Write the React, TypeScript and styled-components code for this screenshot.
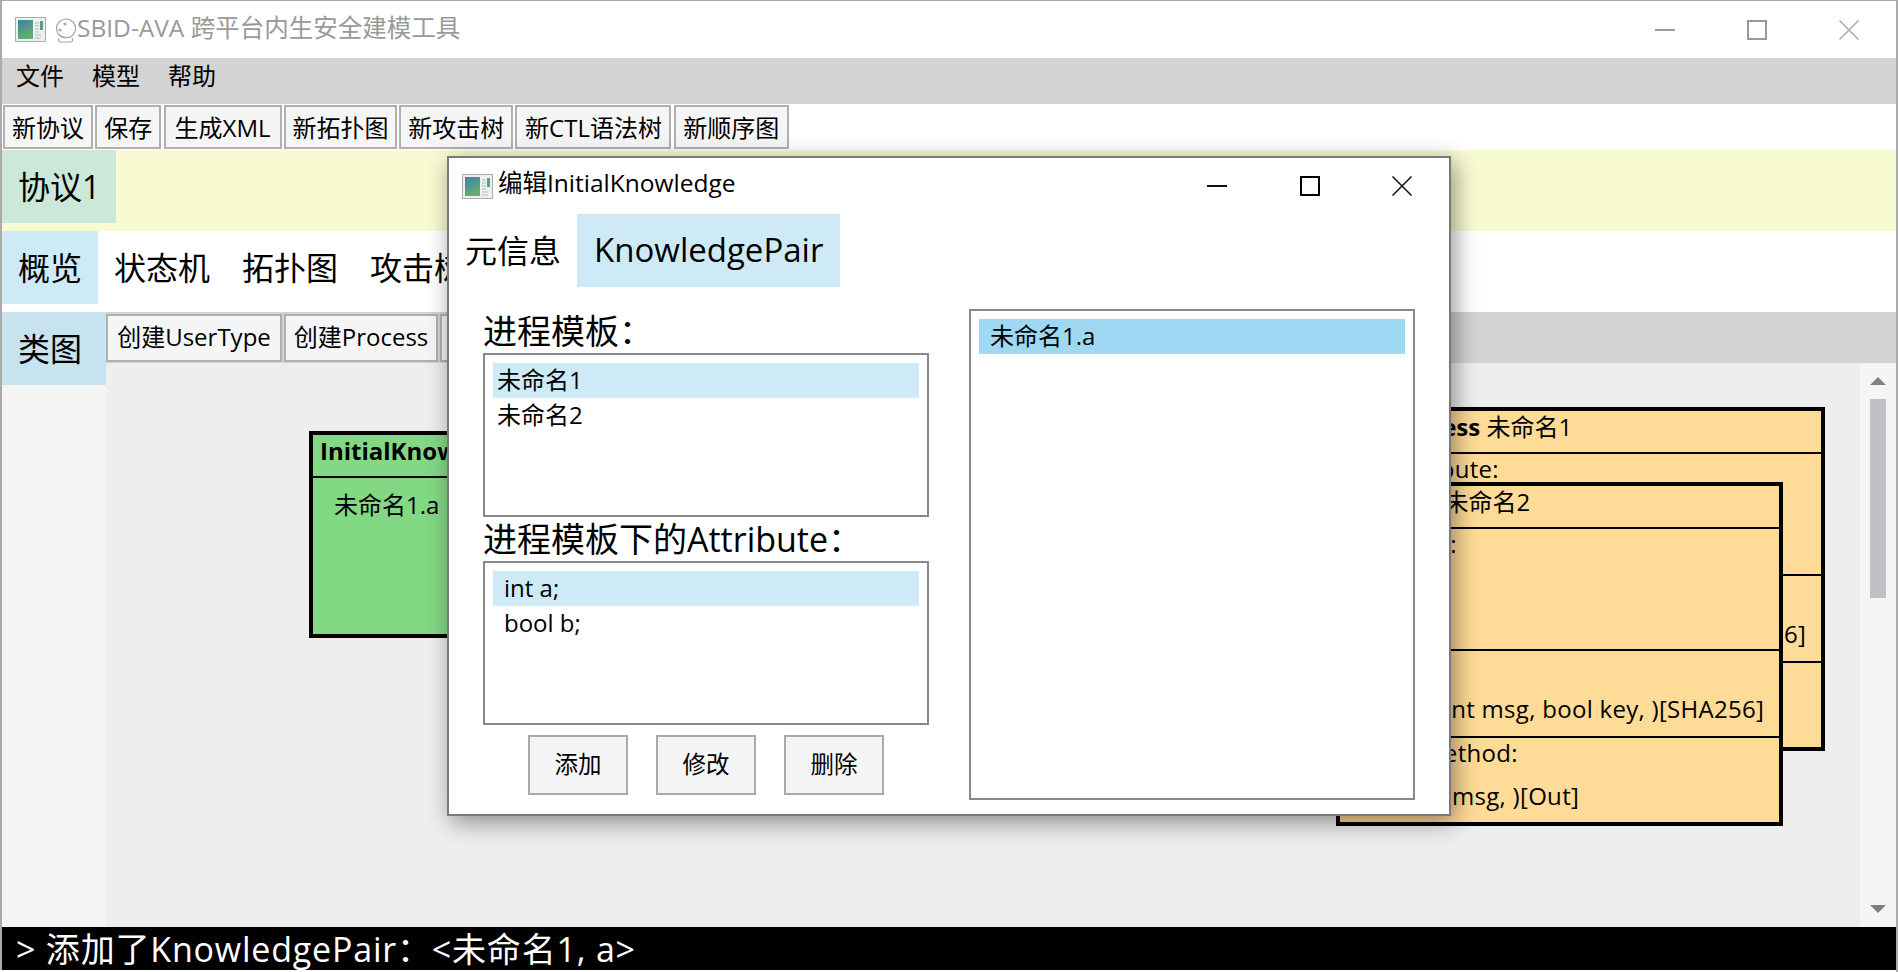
import React from "react";
import styled, { createGlobalStyle } from "styled-components";

const Global = createGlobalStyle`
  html, body { margin: 0; padding: 0; background: #fff; }
  body { width: 1898px; height: 972px; overflow: hidden; font-family: "Open Sans", "Noto Sans CJK SC", sans-serif; color: #000; }
  * { box-sizing: border-box; }
`;

const Screen = styled.div`
  position: relative;
  width: 1898px;
  height: 972px;
  overflow: hidden;
  background: #fff;
`;

const Win = styled.div`
  width: 1896px;
  height: 970px;
  border-top: 1px solid #aaa;
  border-left: 2px solid #aaa;
  display: flex;
  flex-direction: column;
  background: #fff;
`;

const TitleBar = styled.div`
  height: 57px;
  flex: none;
  display: flex;
  align-items: center;
  padding-left: 13px;
  color: #999;
  font-size: 24.5px;
`;

const TitleText = styled.span`
  white-space: pre;
  line-height: 54px;
  height: 57px;
`;

const WinControls = styled.div`
  margin-left: auto;
  display: flex;
  align-items: center;
  gap: 72px;
  padding-right: 37px;
`;

const MenuBar = styled.div`
  height: 46px;
  flex: none;
  background: #d3d3d3;
  display: flex;
  align-items: center;
  gap: 28px;
  padding: 0 0 13px 14px;
  font-size: 24px;
`;

const ToolBar = styled.div`
  height: 46px;
  flex: none;
  display: flex;
  gap: 2.3px;
  padding: 1px 0 1px 1px;
`;

const ToolBtn = styled.div<{ $w?: number }>`
  height: 44px;
  ${p => (p.$w ? `width: ${p.$w}px;` : "padding: 0 7.5px;")}
  background: #f5f5f5;
  border: 2px solid #b0b0b0;
  font-size: 24px;
  line-height: 42px;
  white-space: nowrap;
  text-align: center;
`;

const TabRow = styled.div<{ $bg: string; $h: number }>`
  height: ${p => p.$h}px;
  flex: none;
  background: ${p => p.$bg};
  display: flex;
  align-items: flex-start;
`;

const Tab = styled.div<{ $bg?: string }>`
  height: 73px;
  padding: 0 16px;
  font-size: 32px;
  line-height: 73px;
  white-space: nowrap;
  background: ${p => p.$bg || "transparent"};
`;

const Work = styled.div`
  flex: 1;
  min-height: 0;
  display: flex;
`;

const SideCol = styled.div`
  width: 104px;
  flex: none;
  background: #f5f5f5;
`;

const MainCol = styled.div`
  flex: 1;
  display: flex;
  flex-direction: column;
  min-width: 0;
`;

const SubBar = styled.div`
  height: 51px;
  flex: none;
  background: #d3d3d3;
  display: flex;
  gap: 2px;
  padding-top: 2px;
`;

const SubBtn = styled(ToolBtn)`
  height: 48px;
  line-height: 42px;
`;

const CanvasRow = styled.div`
  flex: 1;
  min-height: 0;
  display: flex;
`;

const Canvas = styled.div`
  flex: 1;
  position: relative;
  background: #eee;
`;

const ScrollTrack = styled.div`
  width: 36px;
  flex: none;
  background: #f5f5f5;
  display: flex;
  flex-direction: column;
  align-items: flex-start;
  padding: 14px 0 14px 10px;
`;

const Thumb = styled.div`
  width: 16px;
  height: 199px;
  margin-top: 14px;
  background: #c0c1c6;
`;

const Arrow = styled.div<{ $down?: boolean }>`
  width: 0;
  height: 0;
  border-left: 8px solid transparent;
  border-right: 8px solid transparent;
  ${p => (p.$down ? "border-top: 8px solid #808080; margin-top: auto;" : "border-bottom: 8px solid #808080;")}
`;

const Status = styled.div`
  height: 43px;
  flex: none;
  background: #000;
  color: #fff;
  font-size: 34px;
  letter-spacing: 0.8px;
  line-height: 44px;
  padding-left: 14px;
  white-space: pre;
  overflow: hidden;
`;

const Card = styled.div<{ $x: number; $y: number; $w: number; $h: number; $bg: string }>`
  position: absolute;
  left: ${p => p.$x}px;
  top: ${p => p.$y}px;
  width: ${p => p.$w}px;
  height: ${p => p.$h}px;
  background: ${p => p.$bg};
  border: 4px solid #000;
  display: flex;
  flex-direction: column;
  font-size: 24px;
`;

const CardHead = styled.div`
  height: 41px;
  flex: none;
  padding-left: 7px;
  line-height: 32px;
  white-space: nowrap;
  b { font-weight: 700; }
`;

const Section = styled.div<{ $h?: number }>`
  ${p => (p.$h ? `height: ${p.$h}px; flex: none;` : "flex: 1;")}
  border-top: 2px solid #000;
  padding-left: 8px;
  display: flex;
  flex-direction: column;
  letter-spacing: 0.3px;
`;

const SecLabel = styled.div`
  height: 40px;
  line-height: 29px;
  white-space: nowrap;
`;

const SecItem = styled.div`
  height: 37px;
  padding-left: 17px;
  line-height: 36px;
  white-space: nowrap;
`;

const Pairs = styled.div`
  padding: 9px 0 0 21px;
  line-height: 36px;
  border-top: 2px solid #000;
  flex: 1;
`;

const Dialog = styled.div`
  position: absolute;
  left: 447px;
  top: 156px;
  width: 1004px;
  height: 660px;
  background: #fff;
  border: 2px solid #7a7a7a;
  box-shadow: 4px 6px 22px rgba(0, 0, 0, 0.42);
  display: flex;
  flex-direction: column;
`;

const DialogTitle = styled.div`
  height: 56px;
  flex: none;
  display: flex;
  align-items: center;
  padding-left: 13px;
  font-size: 24.5px;
  gap: 5px;
`;

const DialogName = styled.span`
  line-height: 50px;
  height: 56px;
`;

const DialogControls = styled.div`
  margin-left: auto;
  display: flex;
  align-items: center;
  gap: 72.5px;
  padding-right: 37px;
`;

const DialogTabs = styled.div`
  height: 73px;
  flex: none;
  display: flex;
`;

const DialogTab = styled.div<{ $on?: boolean }>`
  height: 73px;
  padding: 0 ${p => (p.$on ? 17 : 16)}px;
  font-size: ${p => (p.$on ? 33 : 32)}px;
  line-height: ${p => (p.$on ? 71 : 73)}px;
  background: ${p => (p.$on ? "#cfeaf7" : "transparent")};
`;

const DialogBody = styled.div`
  display: grid;
  grid-template-columns: 446px 446px;
  column-gap: 40px;
  padding: 22px 0 0 34px;
`;

const LeftCol = styled.div`
  display: flex;
  flex-direction: column;
`;

const Label = styled.div`
  height: 44px;
  font-size: 34px;
  line-height: 45px;
  white-space: nowrap;
`;

const ListBox = styled.div<{ $h: number }>`
  height: ${p => p.$h}px;
  border: 2px solid #888;
  padding: 8px;
  background: #fff;
`;

const ListItem = styled.div<{ $bg?: string; $pad: number }>`
  height: 35px;
  padding-left: ${p => p.$pad}px;
  font-size: 24px;
  line-height: 33px;
  background: ${p => p.$bg || "transparent"};
`;

const ActionRow = styled.div`
  margin-top: 10px;
  display: flex;
  justify-content: center;
  gap: 28px;
`;

const ActionBtn = styled.div`
  width: 100px;
  height: 60px;
  background: #f5f5f5;
  border: 2px solid #aaa;
  font-size: 23.5px;
  line-height: 54px;
  text-align: center;
`;

const DesktopEdge = styled.div`
  position: absolute;
  right: 0;
  top: 0;
  width: 2px;
  height: 972px;
  background: #aaa;
`;

const AppIcon = () => (
  <svg width="31" height="25" viewBox="0 0 31 25" style={{ flex: "none" }}>
    <defs>
      <linearGradient id="pane" x1="0" y1="0" x2="0.4" y2="1">
        <stop offset="0" stopColor="#3f7fae" />
        <stop offset="1" stopColor="#63b06c" />
      </linearGradient>
    </defs>
    <rect x="0.5" y="0.5" width="30" height="24" fill="#eef0f0" stroke="#a9adad" />
    <rect x="3" y="3" width="15" height="19" fill="url(#pane)" />
    <path d="M20 6h4M20 9h4M20 12h4M20 15h4M20 18h6M20 21h6" stroke="#b5b9b9" strokeWidth="1" />
    <rect x="25" y="4" width="3" height="9" fill="#5aa27a" />
  </svg>
);

const FaceIcon = () => (
  <svg width="23" height="26" viewBox="0 0 23 26" style={{ flex: "none", margin: "2px 0 0 8px" }} fill="none" stroke="#a6a6a6" strokeWidth="1.2">
    <circle cx="12" cy="10.5" r="9.5" />
    <circle cx="6" cy="12" r="1" />
    <circle cx="11" cy="6" r="1" />
    <path d="M4 16c3 3 6 4 9 3" />
    <path d="M5 20c-1 2-1 4 2 4h9c3 0 3-2 2-4" />
  </svg>
);

const Ctl = ({ kind, color, sw }: { kind: "min" | "max" | "close"; color: string; sw: number }) => (
  <svg width="20" height="20" viewBox="0 0 20 20" style={{ display: "block" }} fill="none" stroke={color} strokeWidth={sw}>
    {kind === "min" && <path d="M0 10h20" />}
    {kind === "max" && <rect x="1" y="1" width="18" height="18" />}
    {kind === "close" && <path d="M0.5 0.5L19.5 19.5M19.5 0.5L0.5 19.5" />}
  </svg>
);

const tools: [string, number][] = [
  ["新协议", 90],
  ["保存", 66],
  ["生成XML", 118],
  ["新拓扑图", 113],
  ["新攻击树", 114],
  ["新CTL语法树", 156],
  ["新顺序图", 115],
];

const ProcessCard = ({ name, x, y }: { name: string; x: number; y: number }) => (
  <Card $x={x} $y={y} $w={447} $h={344} $bg="#fedb96">
    <CardHead>
      <b>Process</b> {name}
    </CardHead>
    <Section $h={122}>
      <SecLabel>Attribute:</SecLabel>
      <SecItem>int a;</SecItem>
      <SecItem>bool b;</SecItem>
    </Section>
    <Section $h={87}>
      <SecLabel>Method:</SecLabel>
      <SecItem>Hash1(int msg, bool key, )[SHA256]</SecItem>
    </Section>
    <Section>
      <SecLabel>In/OutMethod:</SecLabel>
      <SecItem>Out(int msg, )[Out]</SecItem>
    </Section>
  </Card>
);

export default function App() {
  return (
    <Screen>
      <Global />
      <Win>
        <TitleBar>
          <AppIcon />
          <FaceIcon />
          <TitleText>SBID-AVA 跨平台内生安全建模工具</TitleText>
          <WinControls>
            <Ctl kind="min" color="#999" sw={2} />
            <Ctl kind="max" color="#999" sw={2} />
            <Ctl kind="close" color="#aaa" sw={1.5} />
          </WinControls>
        </TitleBar>
        <MenuBar>
          <span>文件</span>
          <span>模型</span>
          <span>帮助</span>
        </MenuBar>
        <ToolBar>
          {tools.map(([t, w]) => (
            <ToolBtn key={t} $w={w}>{t}</ToolBtn>
          ))}
        </ToolBar>
        <TabRow $bg="#f8fad2" $h={81}>
          <Tab $bg="#cce8d8">协议1</Tab>
        </TabRow>
        <TabRow $bg="#fff" $h={81}>
          <Tab $bg="#cfeaf7">概览</Tab>
          <Tab>状态机</Tab>
          <Tab>拓扑图</Tab>
          <Tab>攻击树</Tab>
        </TabRow>
        <Work>
          <SideCol>
            <Tab $bg="#c8e3f0">类图</Tab>
          </SideCol>
          <MainCol>
            <SubBar>
              <SubBtn $w={176}>创建UserType</SubBtn>
              <SubBtn $w={154}>创建Process</SubBtn>
              <SubBtn>创建Axiom</SubBtn>
            </SubBar>
            <CanvasRow>
              <Canvas>
                <Card $x={203} $y={68} $w={420} $h={207} $bg="#83d884">
                  <CardHead>
                    <b>InitialKnowledge</b>
                  </CardHead>
                  <Pairs>未命名1.a</Pairs>
                </Card>
                <ProcessCard name="未命名1" x={1272} y={44} />
                <ProcessCard name="未命名2" x={1230} y={119} />
              </Canvas>
              <ScrollTrack>
                <Arrow />
                <Thumb />
                <Arrow $down />
              </ScrollTrack>
            </CanvasRow>
          </MainCol>
        </Work>
        <Status>{"> 添加了KnowledgePair：<未命名1, a>"}</Status>
      </Win>
      <DesktopEdge />
      <Dialog>
        <DialogTitle>
          <AppIcon />
          <DialogName>编辑InitialKnowledge</DialogName>
          <DialogControls>
            <Ctl kind="min" color="#111" sw={2} />
            <Ctl kind="max" color="#000" sw={2} />
            <Ctl kind="close" color="#111" sw={1.5} />
          </DialogControls>
        </DialogTitle>
        <DialogTabs>
          <DialogTab>元信息</DialogTab>
          <DialogTab $on>KnowledgePair</DialogTab>
        </DialogTabs>
        <DialogBody>
          <LeftCol>
            <Label>进程模板：</Label>
            <ListBox $h={164}>
              <ListItem $bg="#cfeaf7" $pad={4}>未命名1</ListItem>
              <ListItem $pad={4}>未命名2</ListItem>
            </ListBox>
            <Label>进程模板下的Attribute：</Label>
            <ListBox $h={164}>
              <ListItem $bg="#cfeaf7" $pad={11}>int a;</ListItem>
              <ListItem $pad={11}>bool b;</ListItem>
            </ListBox>
            <ActionRow>
              <ActionBtn>添加</ActionBtn>
              <ActionBtn>修改</ActionBtn>
              <ActionBtn>删除</ActionBtn>
            </ActionRow>
          </LeftCol>
          <ListBox $h={491}>
            <ListItem $bg="#9fd8f2" $pad={11}>未命名1.a</ListItem>
          </ListBox>
        </DialogBody>
      </Dialog>
    </Screen>
  );
}
